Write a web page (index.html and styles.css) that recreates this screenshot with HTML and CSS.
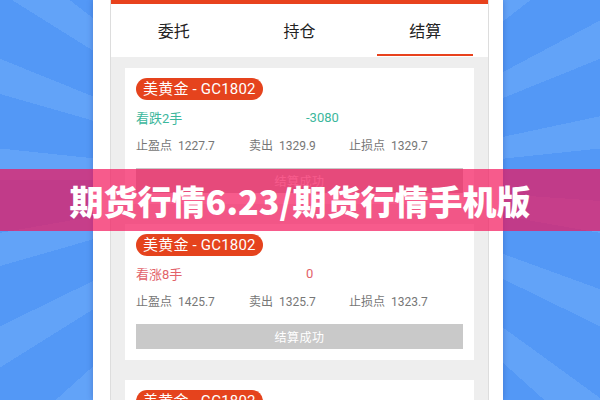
FILE: index.html
```html
<!DOCTYPE html>
<html lang="zh-CN">
<head>
<meta charset="utf-8">
<title>期货行情</title>
<link rel="stylesheet" href="styles.css">
</head>
<body>
<div class="stage">
  <div class="phone">
    <div class="app">
      <div class="topbar"></div>
      <div class="tabs">
        <div class="tab">委托</div>
        <div class="tab">持仓</div>
        <div class="tab active">结算</div>
      </div>
      <div class="list">
        <div class="card">
          <div class="badge">美黄金 - GC1802</div>
          <div class="row main down"><span class="dir">看跌2手</span><span class="pl">-3080</span></div>
          <div class="row info"><span class="c1">止盈点&nbsp;&nbsp;1227.7</span><span class="c2">卖出&nbsp;&nbsp;1329.9</span><span class="c3">止损点&nbsp;&nbsp;1329.7</span></div>
          <div class="btn">结算成功</div>
        </div>
        <div class="card">
          <div class="badge">美黄金 - GC1802</div>
          <div class="row main up"><span class="dir">看涨8手</span><span class="pl">0</span></div>
          <div class="row info"><span class="c1">止盈点&nbsp;&nbsp;1425.7</span><span class="c2">卖出&nbsp;&nbsp;1325.7</span><span class="c3">止损点&nbsp;&nbsp;1323.7</span></div>
          <div class="btn">结算成功</div>
        </div>
        <div class="card">
          <div class="badge">美黄金 - GC1802</div>
          <div class="row main down"><span class="dir">看跌2手</span><span class="pl">-3080</span></div>
          <div class="row info"><span class="c1">止盈点&nbsp;&nbsp;1227.7</span><span class="c2">卖出&nbsp;&nbsp;1329.9</span><span class="c3">止损点&nbsp;&nbsp;1329.7</span></div>
          <div class="btn">结算成功</div>
        </div>
      </div>
    </div>
  </div>
  <div class="banner">期货行情6.23/期货行情手机版</div>
</div>
</body>
</html>
```
FILE: styles.css
```css
* { box-sizing: border-box; }
html, body { margin: 0; padding: 0; }
body {
  width: 600px;
  height: 400px;
  overflow: hidden;
  font-family: Roboto, "Noto Sans CJK SC", sans-serif;
}
.stage {
  position: relative;
  width: 600px;
  height: 400px;
  overflow: hidden;
  display: flex;
  padding-left: 93px;
  background-color: #559bf6;
  background-image: repeating-conic-gradient(from 4deg at 300px 180px, #5398f6 0deg 10deg, #62a3f8 10deg 16deg);
}
.phone {
  width: 410px;
  height: 400px;
  flex-shrink: 0;
  background: #ffffff;
  padding: 0 14px 0 17px;
  box-shadow: 0 0 6px rgba(20, 40, 120, 0.3);
}
.app {
  width: 379px;
  height: 400px;
  overflow: hidden;
  background: #eeeeee;
  border-left: 1px solid #dddddd;
  border-right: 1px solid #dddddd;
  display: flex;
  flex-direction: column;
}
.topbar {
  height: 4px;
  flex-shrink: 0;
  background: #e8421d;
}
.tabs {
  height: 53px;
  flex-shrink: 0;
  background: #ffffff;
  display: flex;
}
.tab {
  flex: 1;
  display: flex;
  align-items: center;
  justify-content: center;
  font-size: 16px;
  color: #222222;
  padding-bottom: 1px;
  position: relative;
}
.tab.active::after {
  content: "";
  position: absolute;
  left: 15px;
  right: 15px;
  bottom: 1px;
  height: 2px;
  background: #e8421d;
}
.list {
  flex-shrink: 0;
  padding: 11px 14px 0 14px;
  display: flex;
  flex-direction: column;
  gap: 20px;
}
.card {
  background: #ffffff;
  padding: 10px 11px 11px 11px;
  display: flex;
  flex-direction: column;
  flex-shrink: 0;
}
.badge {
  align-self: flex-start;
  height: 22px;
  line-height: 22px;
  padding: 0 7px;
  border-radius: 11px;
  background: #e5431d;
  color: #ffffff;
  font-size: 15px;
  letter-spacing: 0.2px;
}
.row {
  display: flex;
  height: 18px;
  align-items: center;
  white-space: nowrap;
}
.main {
  margin-top: 8px;
  font-size: 13px;
}
.main .dir { width: 170px; }
.down { color: #3bb79c; }
.up { color: #e2626a; }
.info {
  margin-top: 9px;
  font-size: 12px;
  color: #777777;
}
.info .c1 { width: 113px; }
.info .c2 { width: 100px; }
.btn {
  margin-top: 15px;
  height: 25px;
  background: #c9c9c9;
  color: #ffffff;
  font-size: 12px;
  display: flex;
  align-items: center;
  justify-content: center;
  letter-spacing: 0.5px;
}
.banner {
  position: absolute;
  left: 0;
  top: 169px;
  width: 600px;
  height: 62px;
  background: rgba(243, 17, 88, 0.69);
  color: #ffffff;
  font-family: "Noto Sans CJK SC", sans-serif;
  font-weight: 900;
  font-size: 34px;
  display: flex;
  align-items: center;
  justify-content: center;
}
```
